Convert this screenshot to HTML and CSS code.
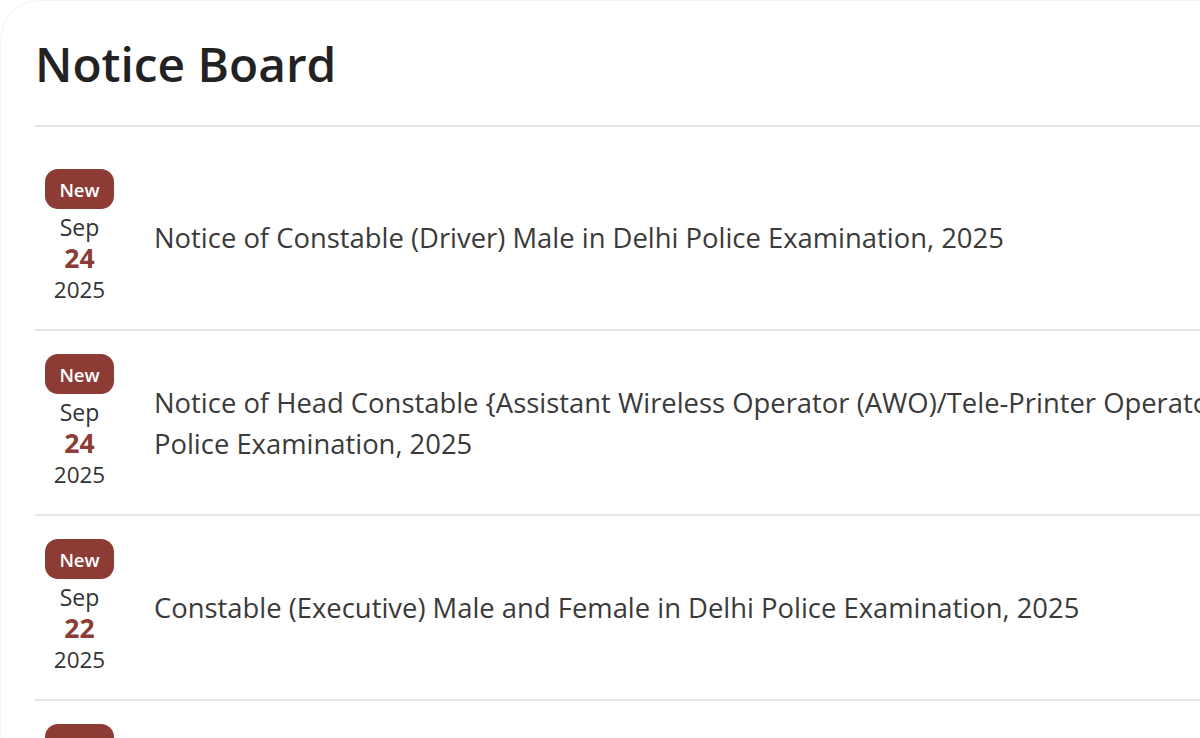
FILE: index.html
```html
<!DOCTYPE html>
<html lang="en">
<head>
<meta charset="utf-8">
<title>Notice Board</title>
<link rel="stylesheet" href="styles.css">
</head>
<body>
<div class="card">
  <div class="card-head">
    <h1 class="title">Notice Board</h1>
  </div>
  <ul class="notices">
    <li class="notice">
      <div class="date">
        <span class="badge">New</span>
        <span class="month">Sep</span>
        <span class="day">24</span>
        <span class="year">2025</span>
      </div>
      <p class="notice-text">Notice of Constable (Driver) Male in Delhi Police Examination, 2025</p>
    </li>
    <li class="notice">
      <div class="date">
        <span class="badge">New</span>
        <span class="month">Sep</span>
        <span class="day">24</span>
        <span class="year">2025</span>
      </div>
      <p class="notice-text">Notice of Head Constable {Assistant Wireless Operator (AWO)/Tele-Printer Operator (TPO)} Male and Female in Delhi Police Examination, 2025</p>
    </li>
    <li class="notice">
      <div class="date">
        <span class="badge">New</span>
        <span class="month">Sep</span>
        <span class="day">22</span>
        <span class="year">2025</span>
      </div>
      <p class="notice-text">Constable (Executive) Male and Female in Delhi Police Examination, 2025</p>
    </li>
    <li class="notice">
      <div class="date">
        <span class="badge">New</span>
        <span class="month">Sep</span>
        <span class="day">19</span>
        <span class="year">2025</span>
      </div>
      <p class="notice-text">Notice of Examination, 2025</p>
    </li>
  </ul>
</div>
</body>
</html>
```
FILE: styles.css
```css
html, body {
  margin: 0;
  padding: 0;
  background: #ffffff;
  overflow: hidden;
  height: 738px;
}

body {
  font-family: "Open Sans", "Noto Sans", sans-serif;
  color: #333333;
}

.card {
  width: 1850px;
  padding: 0 0 0 34px;
  border-top-left-radius: 40px;
  border-left: 1px solid #f4f4f4;
  border-top: 1px solid #f4f4f4;
  box-sizing: border-box;
}

.card-head {
  height: 124px;
  border-bottom: 2px solid #e6e6e6;
  display: flex;
  align-items: center;
}

.title {
  margin: 0 0 0 0;
  font-size: 47.8px;
  font-weight: 600;
  color: #222222;
  letter-spacing: 0;
}

.notices {
  list-style: none;
  margin: 0;
  padding: 19px 0 0 0;
}

.notice {
  display: flex;
  align-items: center;
  gap: 40px;
  padding: 23px 10px 23px 10px;
  border-bottom: 2px solid #e6e6e6;
}

.date {
  width: 69px;
  flex: none;
  display: flex;
  flex-direction: column;
  align-items: center;
}

.badge {
  width: 69px;
  height: 40px;
  border-radius: 13px;
  background: #8d3b35;
  color: #ffffff;
  font-size: 18.5px;
  font-weight: 600;
  display: flex;
  align-items: center;
  justify-content: center;
  margin-bottom: 3px;
}

.month {
  font-size: 23px;
  line-height: 30px;
  color: #333333;
}

.day {
  font-size: 26.5px;
  line-height: 32px;
  font-weight: 700;
  color: #8d3b35;
}

.year {
  font-size: 22.5px;
  line-height: 32px;
  color: #333333;
}

.notice-text {
  margin: 0;
  width: 1560px;
  font-size: 27.4px;
  line-height: 41px;
  color: #3a3a3a;
}
```
